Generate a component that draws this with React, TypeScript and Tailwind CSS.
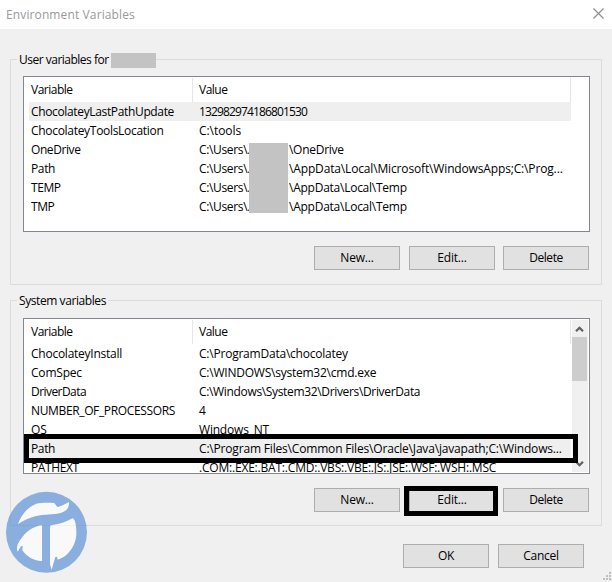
import type { ReactNode } from 'react'

interface Piece {
  text: string
  className: string
}

interface Variable {
  name: Piece
  value: Piece
  rest?: Piece
  selected?: boolean
}

const userVariables: Variable[] = [
  {
    name: { text: 'ChocolateyLastPathUpdate', className: 'tracking-[-0.35px]' },
    value: { text: '132982974186801530', className: 'tracking-[-0.86px]' },
    selected: true,
  },
  {
    name: { text: 'ChocolateyToolsLocation', className: 'tracking-[-0.3px]' },
    value: { text: 'C:\\tools', className: 'tracking-[-0.05px]' },
  },
  {
    name: { text: 'OneDrive', className: 'tracking-[-0.42px]' },
    value: { text: 'C:\\Users\\.', className: 'tracking-[-0.35px]' },
    rest: { text: '\\OneDrive', className: 'tracking-[-0.28px]' },
  },
  {
    name: { text: 'Path', className: 'tracking-[-0.35px]' },
    value: { text: 'C:\\Users\\.', className: 'tracking-[-0.35px]' },
    rest: { text: '\\AppData\\Local\\Microsoft\\WindowsApps;C:\\Prog...', className: 'tracking-[-0.15px]' },
  },
  {
    name: { text: 'TEMP', className: 'tracking-[-0.4px]' },
    value: { text: 'C:\\Users\\.', className: 'tracking-[-0.35px]' },
    rest: { text: '\\AppData\\Local\\Temp', className: 'tracking-[-0.25px]' },
  },
  {
    name: { text: 'TMP', className: 'tracking-[-0.4px]' },
    value: { text: 'C:\\Users\\.', className: 'tracking-[-0.35px]' },
    rest: { text: '\\AppData\\Local\\Temp', className: 'tracking-[-0.25px]' },
  },
]

const systemVariables: Variable[] = [
  {
    name: { text: 'ChocolateyInstall', className: 'tracking-[-0.25px]' },
    value: { text: 'C:\\ProgramData\\chocolatey', className: 'tracking-[-0.22px]' },
  },
  {
    name: { text: 'ComSpec', className: 'tracking-[-0.2px]' },
    value: { text: 'C:\\WINDOWS\\system32\\cmd.exe', className: 'tracking-[-0.23px]' },
  },
  {
    name: { text: 'DriverData', className: 'tracking-[-0.56px]' },
    value: { text: 'C:\\Windows\\System32\\Drivers\\DriverData', className: 'tracking-[-0.34px]' },
  },
  {
    name: { text: 'NUMBER_OF_PROCESSORS', className: 'tracking-[-0.36px]' },
    value: { text: '4', className: 'tracking-[0px]' },
  },
  {
    name: { text: 'OS', className: 'tracking-[-0.2px]' },
    value: { text: 'Windows_NT', className: 'tracking-[-0.2px]' },
  },
  {
    name: { text: 'Path', className: 'tracking-[-0.35px]' },
    value: {
      text: 'C:\\Program Files\\Common Files\\Oracle\\Java\\javapath;C:\\Windows...',
      className: 'tracking-[-0.18px]',
    },
    selected: true,
  },
  {
    name: { text: 'PATHEXT', className: 'tracking-[-0.4px]' },
    value: { text: '.COM:.EXE:.BAT:.CMD:.VBS:.VBE:.JS:.JSE:.WSF:.WSH:.MSC', className: 'tracking-[-0.2px]' },
  },
]

function VariableTable({ variables }: { variables: Variable[] }) {
  return (
    <div className="mt-px ml-[5px] w-[542px] shrink-0">
      <div className="flex h-6 border-r border-[#e5e5e5] leading-6">
        <div className="w-[164px] border-r border-[#e5e5e5] pl-0.5 tracking-[-0.5px]">Variable</div>
        <div className="pl-1.5 tracking-[-0.5px]">Value</div>
      </div>
      {variables.map(({ name, value, rest, selected }) => (
        <div key={name.text} className={`flex h-[19px] leading-[19px] ${selected ? 'bg-[#efefef]' : ''}`}>
          <div className="w-[170px] shrink-0 pl-0.5">
            <span className={name.className}>{name.text}</span>
          </div>
          <div className={rest ? 'w-[90px] shrink-0' : ''}>
            <span className={value.className}>{value.text}</span>
          </div>
          {rest && <span className={rest.className}>{rest.text}</span>}
        </div>
      ))}
    </div>
  )
}

function Button({ children, className = '' }: { children: ReactNode; className?: string }) {
  return (
    <button className={`h-6 w-[86px] border border-[#adadad] bg-[#e1e1e1] text-center leading-[22px] ${className}`}>
      {children}
    </button>
  )
}

function GroupButtons({ marked = false }: { marked?: boolean }) {
  return (
    <div className="mt-3.5 mr-3 flex justify-end">
      <Button className="tracking-[-0.2px]">New...</Button>
      <div className="relative mr-2 ml-[9px] flex">
        <Button className="tracking-[-0.2px]">Edit...</Button>
        {marked && <div className="absolute -top-0.5 -left-[5px] h-[30px] w-[94px] border-[5px] border-black"></div>}
      </div>
      <Button className="tracking-[-0.45px]">Delete</Button>
    </div>
  )
}

function Scrollbar() {
  return (
    <div className="mt-px ml-px flex h-[152px] w-4 flex-col justify-between bg-[#f0f0f0]">
      <div>
        <svg className="block" width="16" height="17" viewBox="0 0 16 17" fill="none">
          <path d="M4 11.2 7.5 7.7 11 11.2" stroke="#606060" strokeWidth="2.2" />
        </svg>
        <div className="h-11 w-[15px] bg-[#cdcdcd]"></div>
      </div>
      <svg className="block" width="16" height="17" viewBox="0 0 16 17" fill="none">
        <path d="M4 6.7 7.5 10.2 11 6.7" stroke="#606060" strokeWidth="2.2" />
      </svg>
    </div>
  )
}

function Logo() {
  return (
    <svg className="absolute top-[485px] left-0" width="95" height="95" viewBox="0 0 285 285">
      <circle cx="139.5" cy="142" r="121.5" fill="#8aaedd" />
      <g fill="#f9f9f9">
        <path d="M54 117C62 92 82 66 109 56C126 52 146 53 162 54C166 57 168 62 173 66C181 65 197 57 207 51C208 62 205 70 198 76C184 88 160 88 137 89C104 90 78 102 54 117Z" />
        <path d="M126 121V228C102 229 78 213 67 196L68 183L63 184L53 200C48 189 53 174 62 163C76 142 98 124 126 121Z" />
        <path d="M152 121C178 118 200 110 219 99C226 107 229 121 229 140C231 176 207 214 173 224L171 215L166 216L155 254L150 238V134C150 129 150 125 152 121Z" />
      </g>
      <path d="M31.5 87V121.5H262" stroke="#000" strokeOpacity="0.04" strokeWidth="3" fill="none" />
    </svg>
  )
}

export default function App() {
  return (
    <div className="relative h-[582px] w-[612px] overflow-hidden bg-[#f0f0f0] font-['Open_Sans',sans-serif] text-[12px] whitespace-nowrap text-black">
      {/* Title bar */}
      <div className="flex h-[29px] justify-between bg-white pl-1.5">
        <span className="leading-[29px] tracking-[0.12px] text-[#999]">Environment Variables</span>
        <svg className="mt-2 mr-[8px]" width="11" height="11" viewBox="0 0 11 11">
          <path d="M0.5 0.5 10.5 10.5M10.5 0.5 0.5 10.5" stroke="#8c8c8c" strokeWidth="1.1" />
        </svg>
      </div>

      {/* User variables */}
      <section className="mt-[30px] ml-2.5 h-[226px] w-[592px] border border-[#dcdcdc]">
        <div className="-mt-[9px] ml-1.5 flex h-[18px] w-fit bg-[#f0f0f0] pl-0.5 leading-[18px]">
          <span className="w-[92px] tracking-[-0.5px]">User variables for</span>
          <span className="mt-0.5 h-[15px] w-[45px] bg-[#c3c3c3]"></span>
        </div>
        <div className="relative mt-[7px] ml-3 flex h-[156px] w-[567px] overflow-hidden border border-[#828790] bg-white">
          <VariableTable variables={userVariables} />
          <div className="absolute top-[66px] left-[225px] h-[70px] w-[39px] bg-[#c3c3c3]"></div>
        </div>
        <GroupButtons />
      </section>

      {/* System variables */}
      <section className="mt-[15px] ml-2.5 h-[226px] w-[592px] border border-[#dcdcdc]">
        <div className="-mt-[9px] ml-1.5 h-[18px] w-[91px] bg-[#f0f0f0] pl-0.5 leading-[18px] tracking-[-0.42px]">
          System variables
        </div>
        <div className="relative mt-2 ml-3 flex h-[156px] w-[567px] overflow-hidden border border-[#828790] bg-white">
          <VariableTable variables={systemVariables} />
          <Scrollbar />
          <div className="absolute top-[115px] left-0 h-[29px] w-[554px] border-[5px] border-black"></div>
        </div>
        <GroupButtons marked />
      </section>

      {/* Dialog buttons */}
      <div className="mt-[18px] mr-7 flex justify-end gap-[9px]">
        <Button className="tracking-[-0.34px]">OK</Button>
        <Button className="tracking-[-0.25px]">Cancel</Button>
      </div>

      <svg className="absolute right-0 bottom-0" width="9" height="10" viewBox="0 0 9 10" fill="#bfbfbf">
        <path d="M6 0h2v2h-2zM3 3h2v2h-2zM6 3h2v2h-2zM0 6h2v2h-2zM3 6h2v2h-2zM6 6h2v2h-2z" />
      </svg>
      <Logo />
    </div>
  )
}
